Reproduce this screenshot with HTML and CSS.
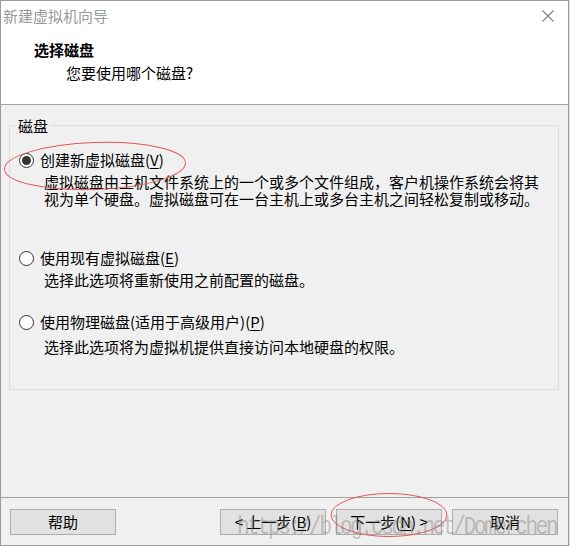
FILE: index.html
```html
<!DOCTYPE html>
<html lang="zh-CN">
<head>
<meta charset="utf-8">
<title>新建虚拟机向导</title>
<link rel="stylesheet" href="styles.css">
</head>
<body>
<div class="window">
  <div class="top">
    <div class="titlebar">
      <span class="title">新建虚拟机向导</span>
      <svg class="close" width="12" height="12" viewBox="0 0 12 12"><path d="M0.5 0.5L11.5 11.5M11.5 0.5L0.5 11.5" stroke="#808080" stroke-width="1.1" fill="none"/></svg>
    </div>
    <div class="header">
      <div class="h-title">选择磁盘</div>
      <div class="h-sub">您要使用哪个磁盘?</div>
    </div>
  </div>
  <div class="main">
    <fieldset class="group">
      <legend class="legend">磁盘</legend>
      <div class="options">
        <div class="option opt-first">
          <div class="opt-row"><span class="radio checked"></span><span class="opt-label">创建新虚拟磁盘(<u>V</u>)</span></div>
          <div class="desc">虚拟磁盘由主机文件系统上的一个或多个文件组成，客户机操作系统会将其<br>视为单个硬盘。虚拟磁盘可在一台主机上或多台主机之间轻松复制或移动。</div>
        </div>
        <div class="option opt-second">
          <div class="opt-row"><span class="radio"></span><span class="opt-label">使用现有虚拟磁盘(<u>E</u>)</span></div>
          <div class="desc">选择此选项将重新使用之前配置的磁盘。</div>
        </div>
        <div class="option opt-third">
          <div class="opt-row"><span class="radio"></span><span class="opt-label">使用物理磁盘(适用于高级用户)(<u>P</u>)</span></div>
          <div class="desc desc-loose">选择此选项将为虚拟机提供直接访问本地硬盘的权限。</div>
        </div>
      </div>
    </fieldset>
  </div>
  <div class="footer">
    <button class="btn">帮助</button>
    <div class="spacer"></div>
    <div class="btn-group">
      <button class="btn">&lt; 上一步(<u>B</u>)</button>
      <button class="btn">下一步(<u>N</u>) &gt;</button>
      <button class="btn">取消</button>
    </div>
  </div>
  <svg class="mark mark-option" width="190" height="54" viewBox="0 0 190 54"><ellipse cx="93" cy="25" rx="90.5" ry="23.5" transform="rotate(-2 93 25)" fill="none" stroke="#e2585b" stroke-width="1"/></svg>
  <svg class="mark mark-next" width="122" height="48" viewBox="0 0 122 48"><ellipse cx="60" cy="23" rx="58" ry="21.5" fill="none" stroke="#e2585b" stroke-width="1"/></svg>
  <div class="watermark">https://blog.csdn.net/Domerchen</div>
</div>
</body>
</html>
```

FILE: styles.css
```css
* {
  box-sizing: border-box;
}

html, body {
  margin: 0;
  padding: 0;
  background: #dfe5ea;
}

body {
  font-family: "Noto Sans CJK SC", "Noto Sans", sans-serif;
  font-size: 15px;
  color: #000;
}

.window {
  position: relative;
  width: 569px;
  height: 546px;
  border: 1px solid #9a9a9a;
  background: #f0f0f0;
  display: flex;
  flex-direction: column;
  overflow: hidden;
}

.top {
  height: 104px;
  background: #fff;
  border-bottom: 1px solid #a0a0a0;
  flex: none;
}

.titlebar {
  height: 30px;
  display: flex;
  align-items: center;
  justify-content: space-between;
  padding: 0 14px 0 2px;
}

.title {
  color: #999;
  line-height: 30px;
}

.close {
  display: block;
}

.header {
  padding: 10px 0 0 33px;
}

.h-title {
  font-weight: bold;
  line-height: 18px;
}

.h-sub {
  margin: 5px 0 0 32px;
  line-height: 18px;
}

.main {
  flex: 1;
  padding: 11px 9px 0 8px;
}

.group {
  margin: 0;
  padding: 0;
  height: 274px;
  border: 1px solid #dcdcdc;
  min-width: 0;
}

.legend {
  margin-left: 6px;
  padding: 0 2px;
  line-height: 19px;
}

.options {
  padding: 16px 0 0 9px;
}

.opt-row {
  display: flex;
  align-items: center;
  height: 18px;
  line-height: 18px;
  gap: 6px;
}

.radio {
  width: 15px;
  height: 15px;
  border: 1px solid #333;
  border-radius: 50%;
  background: #fff;
  display: flex;
  align-items: center;
  justify-content: center;
  flex: none;
}

.radio.checked::after {
  content: "";
  width: 9px;
  height: 9px;
  border-radius: 50%;
  background: #333;
}

.opt-label u {
  text-decoration-thickness: 1px;
  text-underline-offset: 2px;
}

.desc {
  margin: 4px 0 0 25px;
  line-height: 17px;
  white-space: nowrap;
}

.desc-loose {
  margin-top: 7px;
}

.opt-second {
  margin-top: 42px;
}

.opt-third {
  margin-top: 25px;
}

.footer {
  height: 48px;
  flex: none;
  border-top: 1px solid #a0a0a0;
  padding: 11px 10px 0 9px;
  display: flex;
  align-items: flex-start;
}

.spacer {
  flex: 1;
}

.btn-group {
  display: flex;
  gap: 10px;
}

.btn {
  width: 106px;
  height: 26px;
  margin: 0;
  padding: 0;
  background: #e1e1e1;
  border: 1px solid #adadad;
  border-radius: 0;
  font-family: "Noto Sans CJK SC", "Noto Sans", sans-serif;
  font-size: 15px;
  line-height: 22px;
  color: #000;
}

.btn u {
  text-underline-offset: 2px;
}

.mark {
  position: absolute;
  pointer-events: none;
}

.mark-option {
  left: 1px;
  top: 140px;
}

.mark-next {
  left: 328px;
  top: 491px;
}

.watermark {
  position: absolute;
  left: 236px;
  top: 513px;
  font-family: "Liberation Mono", monospace;
  font-size: 21px;
  line-height: 21px;
  letter-spacing: -2.3px;
  color: rgba(120, 120, 120, 0.4);
  white-space: nowrap;
  transform: scaleY(1.25);
  transform-origin: left top;
  pointer-events: none;
}
```
